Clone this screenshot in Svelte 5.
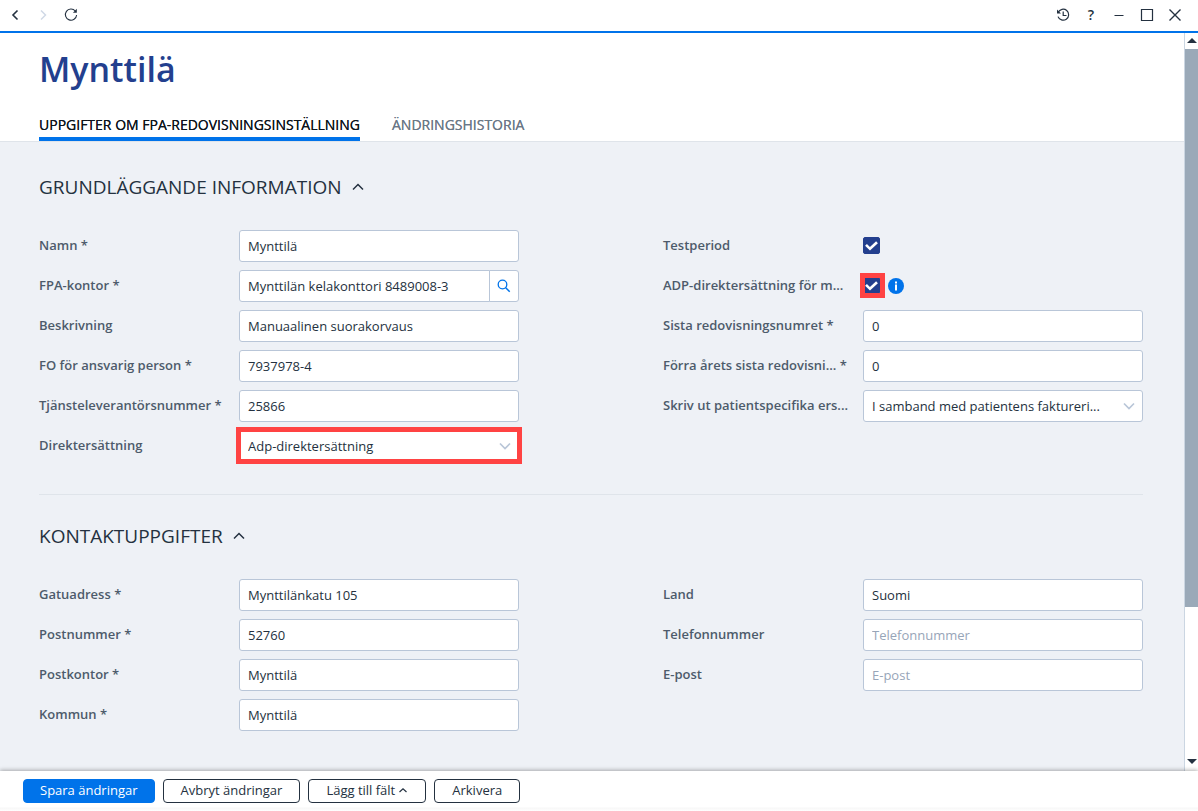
<script>
	let activeTab = $state(0);
	let tabs = ["UPPGIFTER OM FPA-REDOVISNINGSINSTÄLLNING", "ÄNDRINGSHISTORIA"];

	let sections = $state([
		{
			title: "GRUNDLÄGGANDE INFORMATION",
			open: true,
			columns: [
				[
					{ id: "name", label: "Namn *", value: "Mynttilä" },
					{ id: "office", label: "FPA-kontor *", value: "Mynttilän kelakonttori 8489008-3", type: "search" },
					{ id: "description", label: "Beskrivning", value: "Manuaalinen suorakorvaus" },
					{ id: "person", label: "FO för ansvarig person *", value: "7937978-4" },
					{ id: "provider", label: "Tjänsteleverantörsnummer *", value: "25866" },
					{ id: "direct", label: "Direktersättning", value: "Adp-direktersättning", type: "select", marked: true }
				],
				[
					{ id: "test", label: "Testperiod", value: true, type: "check" },
					{ id: "adp", label: "ADP-direktersättning för m...", value: true, type: "check", marked: true, info: true },
					{ id: "last", label: "Sista redovisningsnumret *", value: "0" },
					{ id: "lastyear", label: "Förra årets sista redovisni... *", value: "0" },
					{ id: "print", label: "Skriv ut patientspecifika ers...", value: "I samband med patientens faktureri...", type: "select" }
				]
			]
		},
		{
			title: "KONTAKTUPPGIFTER",
			open: true,
			columns: [
				[
					{ id: "street", label: "Gatuadress *", value: "Mynttilänkatu 105" },
					{ id: "zip", label: "Postnummer *", value: "52760" },
					{ id: "city", label: "Postkontor *", value: "Mynttilä" },
					{ id: "municipality", label: "Kommun *", value: "Mynttilä" }
				],
				[
					{ id: "country", label: "Land", value: "Suomi" },
					{ id: "phone", label: "Telefonnummer", value: "", placeholder: "Telefonnummer" },
					{ id: "email", label: "E-post", value: "", placeholder: "E-post" }
				]
			]
		}
	]);
</script>

<div class="window">
	<div class="toolbar">
		<button class="tool" aria-label="Bakåt">
			<svg width="16" height="16" viewBox="0 0 16 16"><path d="M10.500 3.500 6 8l4.500 4.500" stroke-width="1.6" /></svg>
		</button>
		<button class="tool disabled" aria-label="Framåt">
			<svg width="16" height="16" viewBox="0 0 16 16"><path d="M6 3.500 10.500 8 6 12.500" stroke-width="1.5" /></svg>
		</button>
		<button class="tool" aria-label="Uppdatera">
			<svg width="16" height="16" viewBox="0 0 16 16">
				<path d="M12.300 4A5.600 5.600 0 1 0 13.600 8" stroke-width="1.100" />
				<path d="M13.800 1.800v4H9.900z" fill="currentColor" stroke="none" />
			</svg>
		</button>
		<div class="spacer"></div>
		<button class="tool" aria-label="Historik">
			<svg width="16" height="16" viewBox="0 0 16 16">
				<path d="M3.200 5.300A5.500 5.500 0 1 1 3 9.600M8.200 4.500v4h3.300" stroke-width="1.200" />
				<path d="M2 2.500v4h4z" fill="currentColor" stroke="none" />
			</svg>
		</button>
		<button class="tool help" aria-label="Hjälp">?</button>
		<button class="tool" aria-label="Minimera">
			<svg width="16" height="16" viewBox="0 0 16 16"><path d="M3.500 8.500h9" /></svg>
		</button>
		<button class="tool" aria-label="Maximera">
			<svg width="16" height="16" viewBox="0 0 16 16"><path d="M2.500 2.500h11v11h-11z" stroke-width="1.200" /></svg>
		</button>
		<button class="tool" aria-label="Stäng">
			<svg width="16" height="16" viewBox="0 0 16 16"><path d="m2.500 2.500 11 11m0-11-11 11" stroke-width="1.400" /></svg>
		</button>
	</div>

	<div class="middle">
		<main>
			<header>
				<h1>Mynttilä</h1>
				<nav>
					{#each tabs as tab, i}
						<button class="tab" class:active={activeTab == i} onclick={() => (activeTab = i)}>{tab}</button>
					{/each}
				</nav>
			</header>

			{#each sections as section}
				<section>
					<h2>
						<button class="fold" onclick={() => (section.open = !section.open)}>
							{section.title}
							<svg class:closed={!section.open} width="12" height="12" viewBox="0 0 12 12"><path d="M1 8.500 6 3.500l5 5" stroke-width="1.500" /></svg>
						</button>
					</h2>
					{#if section.open}
						<div class="columns">
							{#each section.columns as column}
								<div class="column">
									{#each column as field}
										<div class="row">
											<label for={field.id}>{field.label}</label>
											{#if field.type == "check"}
												<div class="checkline">
													<span class="check" class:marked={field.marked}>
														<input id={field.id} type="checkbox" bind:checked={field.value} />
														{#if field.value}
															<svg width="17" height="17" viewBox="0 0 17 17"><path d="m3 7.800 4 4 7-6.600" stroke-width="2.600" /></svg>
														{/if}
													</span>
													{#if field.info}
														<button class="info" aria-label="Info">
															<svg width="16" height="16" viewBox="0 0 16 16">
																<circle cx="8" cy="8" r="8" fill="#0073ea" stroke="none" />
																<path d="M8 6.500v6M8 3.500v2" stroke="#fff" stroke-width="2" />
															</svg>
														</button>
													{/if}
												</div>
											{:else if field.type == "select"}
												<div class="control" class:marked={field.marked}>
													<select id={field.id}>
														<option>{field.value}</option>
													</select>
													<svg class="arrow" width="12" height="12" viewBox="0 0 12 12"><path d="m1 3.500 5 5 5-5" stroke-width="1.700" /></svg>
												</div>
											{:else if field.type == "search"}
												<div class="control search">
													<input id={field.id} type="text" bind:value={field.value} />
													<button aria-label="Sök">
														<svg width="14" height="14" viewBox="0 0 14 14"><circle cx="5.500" cy="5.500" r="4.300" stroke-width="1.300" /><path d="m8.700 8.700 4 4" stroke-width="1.500" /></svg>
													</button>
												</div>
											{:else}
												<div class="control">
													<input id={field.id} type="text" placeholder={field.placeholder} bind:value={field.value} />
												</div>
											{/if}
										</div>
									{/each}
								</div>
							{/each}
						</div>
					{/if}
				</section>
			{/each}
		</main>
		<div class="scrollbar">
			<svg width="13" height="16" viewBox="0 0 13 16"><path d="M2 10h10L7 5z" fill="#243140" stroke="none" /></svg>
			<div class="track"><div class="thumb"></div></div>
			<svg width="13" height="16" viewBox="0 0 13 16"><path d="M2 4h10L7 9z" fill="#243140" stroke="none" /></svg>
		</div>
	</div>

	<footer>
		<button class="action primary">Spara ändringar</button>
		<button class="action">Avbryt ändringar</button>
		<button class="action">
			Lägg till fält
			<svg width="10" height="8" viewBox="0 0 10 8"><path d="m1.500 6 3.500-3.300L8.500 6" stroke-width="1.200" /></svg>
		</button>
		<button class="action">Arkivera</button>
	</footer>
</div>

<style>
	:global(body) {
		margin: 0;
	}
	.window {
		display: flex;
		flex-direction: column;
		height: 100vh;
		background: #fff;
		color: #243140;
		font-family: "Segoe UI", "Open Sans", "Noto Sans", sans-serif;
		font-size: 13px;
		line-height: 20px;
	}
	.window * {
		box-sizing: border-box;
	}
	button,
	input,
	select {
		font: inherit;
		color: inherit;
		margin: 0;
	}
	button {
		background: none;
		border: none;
		padding: 0;
		cursor: pointer;
	}
	svg {
		display: block;
		flex: none;
		fill: none;
		stroke: currentColor;
	}

	.toolbar {
		display: flex;
		align-items: center;
		gap: 12px;
		height: 33px;
		flex: none;
		padding: 0 15px 2px 7px;
		border-bottom: 2px solid #0073ea;
	}
	.tool {
		display: flex;
		align-items: center;
		justify-content: center;
		width: 16px;
		height: 16px;
	}
	.tool.disabled {
		color: #d0d9e6;
	}
	.help {
		font-size: 14px;
		font-weight: 600;
	}
	.spacer {
		flex: 1;
	}

	.middle {
		display: flex;
		flex: 1;
		min-height: 0;
	}
	main {
		flex: 1;
		min-width: 0;
		overflow: hidden;
		background: #eef1f6;
	}
	header {
		background: #fff;
		padding: 12px 39px 0;
		border-bottom: 1px solid #dfe4ea;
	}
	h1 {
		margin: 0;
		color: #233f8e;
		font-size: 34px;
		font-weight: 600;
		line-height: 48px;
	}
	nav {
		display: flex;
		gap: 32px;
		margin-top: 20px;
	}
	.tab {
		height: 28px;
		padding-bottom: 1px;
		border-bottom: 4px solid transparent;
		font-size: 14px;
		color: #6b7887;
		text-shadow: 0 0 0 currentColor;
		white-space: nowrap;
	}
	.tab.active {
		color: #0d141c;
		border-bottom-color: #0073ea;
	}

	section {
		margin: 0 41px 0 39px;
		padding: 31px 0 32px;
	}
	section + section {
		border-top: 1px solid #dfe4ea;
		padding-top: 27px;
	}
	h2 {
		margin: 0 0 29px;
		font-size: 19px;
		font-weight: 400;
		line-height: 28px;
	}
	.fold {
		display: flex;
		align-items: center;
		gap: 10px;
	}
	.closed {
		transform: rotate(180deg);
	}
	.columns {
		display: grid;
		grid-template-columns: 1fr 1fr;
		column-gap: 144px;
	}
	.column {
		display: flex;
		flex-direction: column;
		gap: 8px;
		min-width: 0;
	}
	.row {
		display: flex;
		height: 32px;
	}
	label {
		flex: none;
		width: 200px;
		padding-top: 5px;
		font-weight: 600;
		color: #4d5b6b;
		white-space: nowrap;
	}
	.control {
		position: relative;
		display: flex;
		flex: 1;
		min-width: 0;
	}
	.control input,
	.control select {
		flex: 1;
		width: 100%;
		min-width: 0;
		padding: 0 8px;
		background: #fff;
		border: 1px solid #b9c6d8;
		border-radius: 3px;
		outline: none;
		appearance: none;
	}
	.control select {
		padding-right: 32px;
	}
	.control input::placeholder {
		color: #97a5b8;
		opacity: 1;
	}
	.search input {
		border-radius: 3px 0 0 3px;
	}
	.search button {
		display: flex;
		align-items: center;
		justify-content: center;
		width: 30px;
		margin-left: -1px;
		background: #fff;
		border: 1px solid #b9c6d8;
		border-radius: 0 3px 3px 0;
		color: #0073ea;
	}
	.arrow {
		position: absolute;
		top: 10px;
		right: 8px;
		color: #b9c6d8;
		pointer-events: none;
	}
	.marked::after {
		content: "";
		position: absolute;
		border: 5px solid #ff4343;
		pointer-events: none;
	}
	.control.marked::after {
		inset: -3px -3px -2px;
	}
	.check.marked::after {
		inset: -4px -5px -4px -3px;
	}
	.checkline {
		display: flex;
		align-items: center;
		gap: 8px;
		height: 31px;
	}
	.check {
		position: relative;
		width: 17px;
		height: 17px;
	}
	.check input {
		display: block;
		width: 17px;
		height: 17px;
		appearance: none;
		background: #fff;
		border: 1px solid #233f8e;
		border-radius: 2px;
	}
	.check input:checked {
		background: #233f8e;
	}
	.check svg {
		position: absolute;
		top: 0;
		left: 0;
		color: #fff;
		pointer-events: none;
	}

	.scrollbar {
		display: flex;
		flex-direction: column;
		width: 14px;
		border-left: 1px solid #cbd6e2;
	}
	.track {
		flex: 1;
	}
	.thumb {
		height: 79%;
		background: #9aa9b8;
	}

	footer {
		position: relative;
		display: flex;
		flex: none;
		gap: 8px;
		height: 40px;
		padding: 8px 23px;
		background: linear-gradient(#fff 36px, #f7f7f7 37px, #fff 40px);
		box-shadow: 0 -1px 4px rgba(0, 0, 0, 0.3);
	}
	.action {
		display: flex;
		align-items: center;
		gap: 3px;
		height: 24px;
		padding: 0 17px 2px;
		border: 1px solid #243140;
		border-radius: 4px;
		white-space: nowrap;
	}
	.primary {
		padding: 0 16px 2px;
		background: #0073ea;
		border-color: #0073ea;
		color: #fff;
	}
</style>
